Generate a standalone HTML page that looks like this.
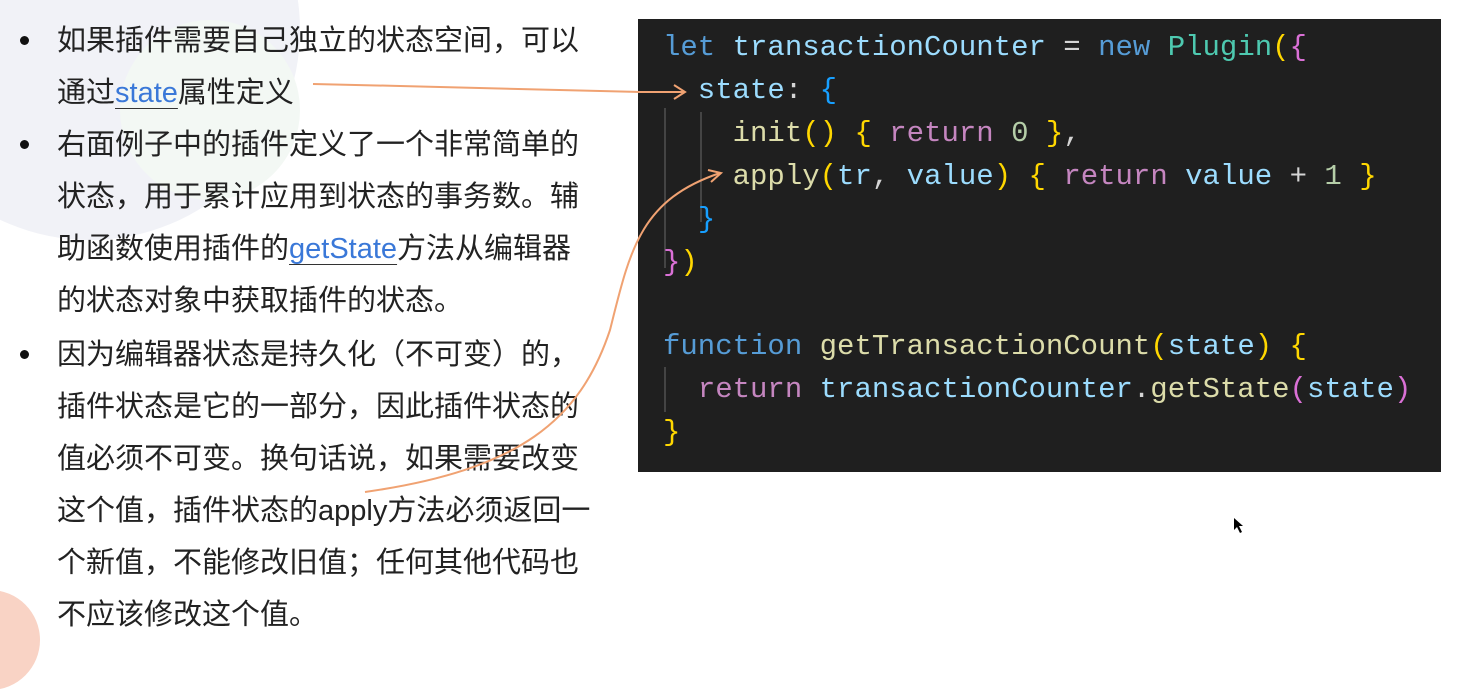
<!DOCTYPE html>
<html><head><meta charset="utf-8"><style>
body{margin:0;width:1468px;height:644px;background:#fff;position:relative;overflow:hidden;font-family:"Liberation Sans","Noto Sans CJK SC",sans-serif}
.t{position:absolute;left:57px;font-size:29px;color:#222;white-space:nowrap;line-height:52px}
.b{position:absolute;left:20px;width:9px;height:9px;border-radius:50%;background:#111}
.l{color:#3a78d8;text-decoration:underline;text-decoration-color:#333;text-underline-offset:6px;text-decoration-thickness:1px}
.code{position:absolute;left:638px;top:19px;width:803px;height:453px;background:#1f1f1f}
.c{position:absolute;left:663px;font-family:"Liberation Mono",monospace;font-size:29px;white-space:pre;color:#9cdcfe}
.k{color:#569cd6}.g{color:#4ec9b0}.y{color:#ffd700}.p{color:#c586c0}.f{color:#dcdcaa}.n{color:#b5cea8}.w{color:#d4d4d4}.bl{color:#179fff}.pk{color:#da70d6}
</style></head><body>
<div style="position:absolute;left:-120px;top:-180px;width:420px;height:420px;border-radius:50%;background:#f1f2f7"></div>
<div style="position:absolute;left:120px;top:20px;width:180px;height:180px;border-radius:50%;background:#f3f8f4"></div>
<div style="position:absolute;left:-60px;top:590px;width:100px;height:100px;border-radius:50%;background:#f9d3c5"></div>
<div class="b" style="top:36px"></div>
<div class="t" style="top:15px">如果插件需要自己独立的状态空间，可以</div>
<div class="t" style="top:67px">通过<span class="l">state</span>属性定义</div>
<div class="b" style="top:140px"></div>
<div class="t" style="top:119px">右面例子中的插件定义了一个非常简单的</div>
<div class="t" style="top:171px">状态，用于累计应用到状态的事务数。辅</div>
<div class="t" style="top:223px">助函数使用插件的<span class="l">getState</span>方法从编辑器</div>
<div class="t" style="top:275px">的状态对象中获取插件的状态。</div>
<div class="b" style="top:350px"></div>
<div class="t" style="top:329px">因为编辑器状态是持久化（不可变）的，</div>
<div class="t" style="top:381px">插件状态是它的一部分，因此插件状态的</div>
<div class="t" style="top:433px">值必须不可变。换句话说，如果需要改变</div>
<div class="t" style="top:485px">这个值，插件状态的apply方法必须返回一</div>
<div class="t" style="top:537px">个新值，不能修改旧值；任何其他代码也</div>
<div class="t" style="top:589px">不应该修改这个值。</div>
<div class="code"></div>
<div style="position:absolute;left:664px;top:108px;width:2px;height:160px;background:#444"></div>
<div style="position:absolute;left:700px;top:112px;width:2px;height:110px;background:#444"></div>
<div style="position:absolute;left:664px;top:367px;width:2px;height:45px;background:#444"></div>
<div class="c" style="top:31px"><span class="k">let</span> transactionCounter <span class="w">=</span> <span class="k">new</span> <span class="g">Plugin</span><span class="y">(</span><span class="pk">{</span></div>
<div class="c" style="top:74px">  state<span class="w">:</span> <span class="bl">{</span></div>
<div class="c" style="top:117px">    <span class="f">init</span><span class="y">()</span> <span class="y">{</span> <span class="p">return</span> <span class="n">0</span> <span class="y">}</span><span class="w">,</span></div>
<div class="c" style="top:160px">    <span class="f">apply</span><span class="y">(</span>tr<span class="w">,</span> value<span class="y">)</span> <span class="y">{</span> <span class="p">return</span> value <span class="w">+</span> <span class="n">1</span> <span class="y">}</span></div>
<div class="c" style="top:203px">  <span class="bl">}</span></div>
<div class="c" style="top:246px"><span class="pk">}</span><span class="y">)</span></div>
<div class="c" style="top:330px"><span class="k">function</span> <span class="f">getTransactionCount</span><span class="y">(</span>state<span class="y">)</span> <span class="y">{</span></div>
<div class="c" style="top:373px">  <span class="p">return</span> transactionCounter<span class="w">.</span><span class="f">getState</span><span class="pk">(</span>state<span class="pk">)</span></div>
<div class="c" style="top:416px"><span class="y">}</span></div>
<svg style="position:absolute;left:0;top:0" width="1468" height="644">
<g fill="none" stroke="#f0a272" stroke-width="2">
<path d="M313 84 C420 86 520 90 640 92 L684 92"/>
<path d="M674 85 L685 92 L674 99"/>
<path d="M365 492 C520 470 580 420 610 330 C630 250 640 200 720 173"/>
<path d="M708 170 L721 173 L711 182"/>
</g>
<path d="M1234 518 L1234 530 L1237 527 L1240 533 L1242 532 L1239 526 L1243 526 Z" fill="#000"/>
</svg>
</body></html>
